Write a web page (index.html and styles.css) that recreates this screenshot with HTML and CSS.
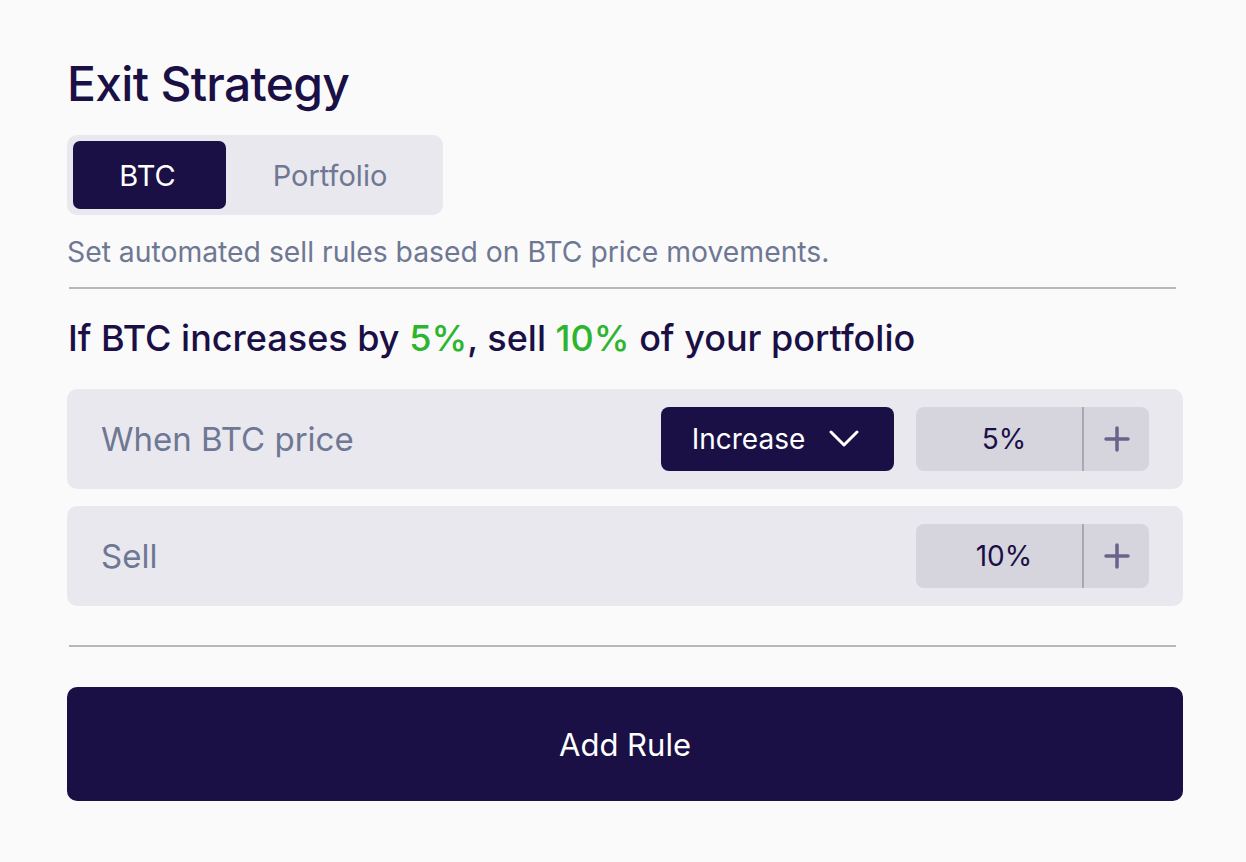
FILE: index.html
```html
<!DOCTYPE html>
<html>
<head>
<meta charset="utf-8">
<link rel="stylesheet" href="styles.css">
</head>
<body>
<main class="panel">
  <h1 class="title">Exit Strategy</h1>
  <div class="toggle">
    <button class="tab active">BTC</button>
    <button class="tab">Portfolio</button>
  </div>
  <p class="subtitle">Set automated sell rules based on BTC price movements.</p>
  <hr class="divider">
  <h2 class="summary">If BTC increases by <span class="hl">5%</span>, sell <span class="hl">10%</span> of your portfolio</h2>
  <div class="rows">
    <div class="row">
      <span class="label">When BTC price</span>
      <div class="controls">
        <button class="select">Increase
          <svg class="chev" width="30" height="18" viewBox="0 0 30 18"><path d="M2 2 L15 15 L28 2" fill="none" stroke="#fff" stroke-width="3" stroke-linecap="round" stroke-linejoin="round"/></svg>
        </button>
        <div class="stepper">
          <span class="value">5%</span>
          <span class="plus"><svg width="26" height="26" viewBox="0 0 26 26"><path d="M13 2 V24 M2 13 H24" fill="none" stroke="#67638a" stroke-width="3.5" stroke-linecap="round"/></svg></span>
        </div>
      </div>
    </div>
    <div class="row">
      <span class="label">Sell</span>
      <div class="controls">
        <div class="stepper">
          <span class="value">10%</span>
          <span class="plus"><svg width="26" height="26" viewBox="0 0 26 26"><path d="M13 2 V24 M2 13 H24" fill="none" stroke="#67638a" stroke-width="3.5" stroke-linecap="round"/></svg></span>
        </div>
      </div>
    </div>
  </div>
  <hr class="divider bottom">
  <button class="add">Add Rule</button>
</main>
</body>
</html>
```
FILE: styles.css
```css
* { box-sizing: border-box; }
html, body { margin: 0; background: #fafafa; }
body {
  font-family: Inter, "Noto Sans", sans-serif;
  color: #1a1046;
  width: 1246px;
  height: 862px;
  overflow: hidden;
}
.panel {
  padding: 55px 63px 0 67px;
  display: flex;
  flex-direction: column;
}
.title {
  margin: 0;
  font-size: 48px;
  line-height: 58px;
  font-weight: 500;
  letter-spacing: -0.7px;
}
.toggle {
  margin-top: 22px;
  align-self: flex-start;
  display: flex;
  width: 376px;
  height: 80px;
  padding: 6px;
  background: #e8e8ee;
  border-radius: 10px;
}
.tab {
  border: 0;
  background: transparent;
  font-family: inherit;
  font-size: 29px;
  color: #6e7793;
  border-radius: 7px;
  cursor: pointer;
  flex: 1 1 auto;
  padding: 0;
}
.tab.active {
  flex: 0 0 153px;
  background: #1a1046;
  color: #fff;
  padding-right: 4px;
}
.tab + .tab { padding-right: 3px; }
.subtitle {
  margin: 19px 0 0 0;
  font-size: 28.3px;
  line-height: 36px;
  color: #6e7793;
}
.divider {
  margin: 17px 7px 0 2px;
  border: 0;
  height: 2px;
  background: #b8b8b8;
}
.summary {
  margin: 27px 0 0 1px;
  font-size: 36px;
  line-height: 44px;
  font-weight: 500;
}
.hl { color: #2eb52e; }
.rows {
  margin-top: 29px;
  display: flex;
  flex-direction: column;
  gap: 17px;
}
.row {
  height: 100px;
  background: #e8e8ee;
  border-radius: 10px;
  display: flex;
  align-items: center;
  justify-content: space-between;
  padding: 0 34px 0 34px;
}
.label {
  font-size: 33px;
  color: #6e7793;
}
.controls {
  display: flex;
  align-items: center;
  gap: 22px;
}
.select {
  width: 233px;
  height: 64px;
  border: 0;
  border-radius: 8px;
  background: #1a1046;
  color: #fff;
  font-family: inherit;
  font-size: 28px;
  display: flex;
  align-items: center;
  justify-content: center;
  gap: 24px;
  padding: 0 4px 0 0;
}
.stepper {
  width: 233px;
  height: 64px;
  background: #d6d5de;
  border-radius: 8px;
  display: flex;
  align-items: stretch;
}
.value {
  flex: 1;
  border-right: 2px solid #a9a7b6;
  display: flex;
  align-items: center;
  justify-content: center;
  padding-left: 10px;
  font-size: 28px;
  color: #1a1046;
}
.plus {
  width: 65px;
  display: flex;
  align-items: center;
  justify-content: center;
}
.divider.bottom { margin-top: 39px; }
.add {
  margin-top: 40px;
  height: 114px;
  border: 0;
  border-radius: 10px;
  background: #1a1046;
  color: #fff;
  font-family: inherit;
  font-size: 31px;
  font-weight: 400;
}
```
